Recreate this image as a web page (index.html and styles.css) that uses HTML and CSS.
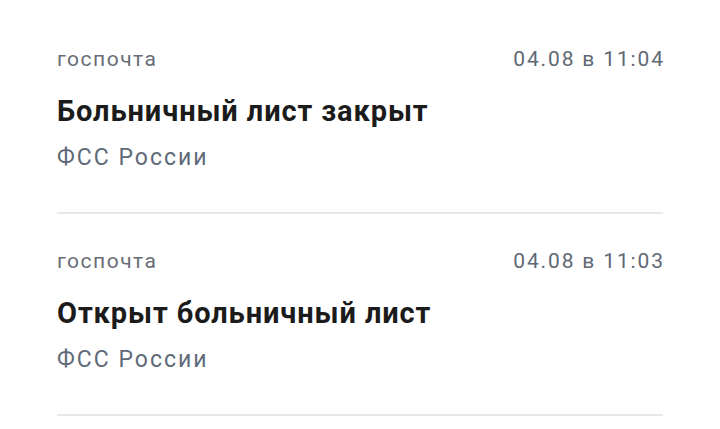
FILE: index.html
```html
<!DOCTYPE html>
<html lang="ru">
<head>
<meta charset="utf-8">
<link rel="stylesheet" href="styles.css">
</head>
<body>
<ul class="list">
  <li class="item">
    <div class="meta">
      <span class="source">госпочта</span>
      <span class="date">04.08 в 11:04</span>
    </div>
    <div class="title">Больничный лист закрыт</div>
    <div class="sender">ФСС России</div>
  </li>
  <li class="item">
    <div class="meta">
      <span class="source">госпочта</span>
      <span class="date">04.08 в 11:03</span>
    </div>
    <div class="title">Открыт больничный лист</div>
    <div class="sender">ФСС России</div>
  </li>
</ul>
</body>
</html>
```
FILE: styles.css
```css
html, body {
  margin: 0;
  padding: 0;
  background: #ffffff;
}
body {
  font-family: Roboto, "Noto Sans", sans-serif;
}
.list {
  list-style: none;
  margin: 0;
  padding: 12px 57px 0;
}
.item {
  padding-top: 33px;
  padding-bottom: 39px;
  border-bottom: 2px solid #e6e8ec;
  display: flex;
  flex-direction: column;
}
.meta {
  display: flex;
  justify-content: space-between;
  align-items: baseline;
  font-size: 21px;
  line-height: 28px;
  color: #686d76;
  letter-spacing: 1.5px;
}
.date {
  letter-spacing: 1.85px;
  margin-right: -1.85px;
  color: #606874;
}
.title {
  margin-top: 20px;
  font-size: 29px;
  font-weight: 700;
  line-height: 36px;
  color: #1b1b1b;
  letter-spacing: 0.9px;
}
.sender {
  margin-top: 14px;
  font-size: 23px;
  line-height: 30px;
  color: #5f6a79;
  letter-spacing: 2px;
}
```
